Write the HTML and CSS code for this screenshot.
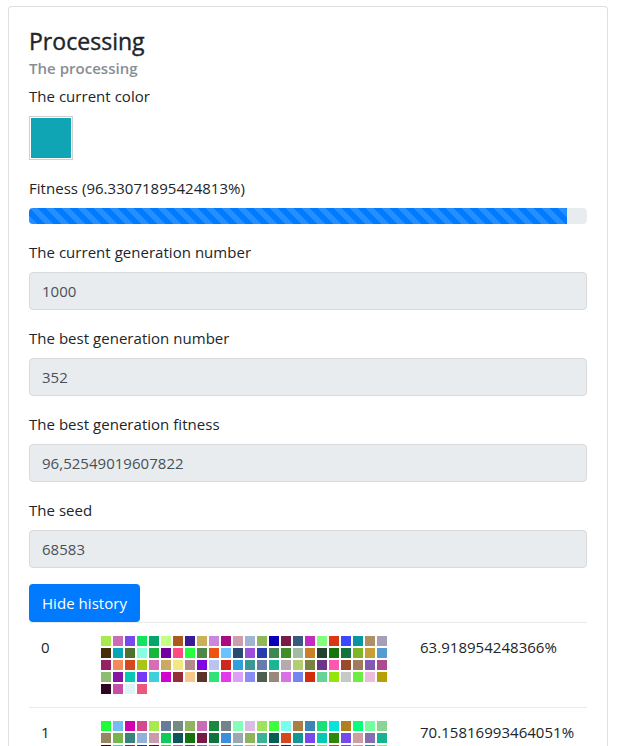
FILE: index.html
```html
<!DOCTYPE html>
<html lang="en">
<head>
<meta charset="utf-8">
<title>Processing</title>
<link rel="stylesheet" href="styles.css">
</head>
<body>
<main class="card">
  <h5 class="card-title">Processing</h5>
  <h6 class="card-subtitle">The processing</h6>
  <section class="group">
    <div class="label">The current color</div>
    <div class="swatch"></div>
  </section>
  <section class="group">
    <div class="label">Fitness (96.33071895424813%)</div>
    <div class="progress"><div class="progress-bar" style="width:96.3307%"></div></div>
  </section>
  <section class="group">
    <div class="label">The current generation number</div>
    <div class="control">1000</div>
  </section>
  <section class="group">
    <div class="label">The best generation number</div>
    <div class="control">352</div>
  </section>
  <section class="group">
    <div class="label">The best generation fitness</div>
    <div class="control">96,52549019607822</div>
  </section>
  <section class="group">
    <div class="label">The seed</div>
    <div class="control">68583</div>
  </section>
  <button class="btn" type="button">Hide history</button>
  <div class="history">
    <div class="row"><div class="cell">0</div><div class="cell colors" id="gen-0"></div><div class="cell">63.918954248366%</div></div>
    <div class="row"><div class="cell">1</div><div class="cell colors" id="gen-1"></div><div class="cell">70.15816993464051%</div></div>
  </div>
</main>
<script src="history.js"></script>
</body>
</html>
```
FILE: styles.css
```css
* { box-sizing: border-box; }
body {
  margin: 0;
  padding: 6px 9px 0 8px;
  background: #fff;
  color: #212529;
  font: 400 15px/24px "Open Sans", "Noto Sans", sans-serif;
  letter-spacing: .03px;
}
.card {
  width: 600px;
  height: 740px;
  overflow: hidden;
  padding: 20px 20px 0;
  border: 1px solid #dfdfdf;
  border-bottom: 0;
  border-radius: 4px 4px 0 0;
}
.card-title {
  margin: 0 0 3px;
  font-size: 23px;
  font-weight: 500;
  line-height: 29px;
  -webkit-text-stroke: .4px #212529;
}
.card-subtitle {
  margin: 0 0 6px;
  color: #868e96;
  font-size: 15px;
  font-weight: 600;
  line-height: 19px;
}
.group { margin-bottom: 16px; }
.label { height: 24px; margin-bottom: 8px; }
.swatch {
  width: 44px;
  height: 44px;
  padding: 1px;
  border: 1px solid #cfcfcf;
  background: #10a5b5 content-box;
}
.progress {
  height: 16px;
  overflow: hidden;
  border-radius: 4px;
  background: #e9ecef;
}
.progress-bar {
  height: 16px;
  background-color: #007bff;
  background-image: linear-gradient(45deg, rgba(255,255,255,.15) 25%, transparent 25%, transparent 50%, rgba(255,255,255,.15) 50%, rgba(255,255,255,.15) 75%, transparent 75%, transparent);
  background-size: 16px 16px;
}
.control {
  height: 38px;
  padding: 6px 12px;
  border: 1px solid #d8dadc;
  border-radius: 4px;
  background: #e9ecef;
  color: #495057;
}
.btn {
  display: block;
  width: 111px;
  height: 38px;
  padding: 0;
  border: 0;
  border-radius: 4px;
  background: #007bff;
  color: #fff;
  font: inherit;
  letter-spacing: .05px;
}
.row {
  display: grid;
  grid-template-columns: 60px 319px 1fr;
  height: 85px;
  border-top: 1px solid #e9ecef;
}
.cell { padding: 12px; }
.colors {
  display: grid;
  grid-template-columns: repeat(24, 10px);
  grid-auto-rows: 10px;
  gap: 2px;
  align-content: start;
  padding-top: 13px;
}
```
FILE: history.js
```js
const generations = {
  'gen-0': `a8e94f c96bb5 7549eb 12e55d 06a56b c3ff84 ad591b 3a1a95 c9b15b cb86dd aa0b80 cf9eac a1b4d3 91b75c 0800b8 771b49 39597f c42bc2 83ff7c da3714 3c48ff 06969f b18f65 a59fb8
  482e08 08a5b4 4e712d 86ffe1 19b63b 7200a0 ff4c7e 22ff3d 4f8747 f05310 6ac3ff 274c70 9b50dc 263fae 3d8950 418d28 a1bba6 c98027 22442e 16740f 13733f 80b52a c69f37 559dd1
  962064 f28b59 d3481d a7c616 d66eb3 cba961 f3e783 b48b8b 8003e3 b9c4f0 cf281f 309fdc 3b9792 687bad 19b595 b8a9af b5cc72 79833f 6c358a fe57b0 984a2d a07c5d 835ab2 ac4b92
  8cbd70 8416a6 05c9b2 7538fa 3fd0dc d100d1 942d38 f5c788 593327 30e377 e537ee dca1f6 888df3 4d6050 9b887d d771e4 7485ee d32b0b 66d397 94e60a c7c9c7 6bee42 eebcda b5a103
  300420 c350a6 dcf4f6 eb577e`,
  'gen-1': `18ff38 75bcef d100b2 d44890 a9e94e 677c99 748a82 91b45e c96bb5 178a3b 738489 83ffb8 d8bde7 9ee35b 3eff3b 78ffee a97e43 3b86b3 19e177 0ae3dc b17f1d 08ff79 73ff9c 8cd494
  958761 77b64b 38837c 92b1d9 ca9ca9 10ca5a 0d545b 16720f 751b46 10733d 3f8ddd 9aa9b0 90b45d 3cb397 065d51 d3481d 129794 7648ed 05c9b2 2e870b 7549eb cf9ea1 856db3 17b390
  300420 20dce8 942064 123b8f 48074e 21d956 e456b0 81358c 5781b0 a9aeb5 d33211 52b2d2 d2a4b3 27a380 843281 122c82 7e758d 4b7456 95df36 cf3f20 7549eb d09bab 159b96 a2e45e`
};

for (const [id, colors] of Object.entries(generations)) {
  const target = document.getElementById(id);
  for (const color of colors.trim().split(/\s+/)) {
    const item = document.createElement('i');
    item.style.backgroundColor = '#' + color;
    target.append(item);
  }
}
```
